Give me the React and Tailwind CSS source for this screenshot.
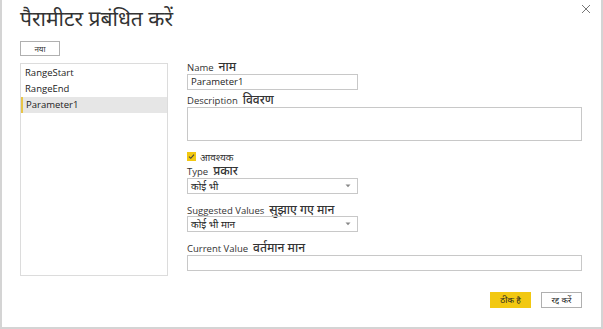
import React from "react";

const font = { fontFamily: '"Open Sans", "Noto Sans", "Noto Sans Devanagari", "Liberation Sans", sans-serif' };

function Label({ en, hi, className = "" }) {
  return (
    <div className={"flex items-baseline h-[13px] leading-[13px] text-[#333] " + className}>
      <span className="text-[9.5px]">{en}</span>
      <span className="text-[12px] ml-[5px] font-medium">{hi}</span>
    </div>
  );
}

function Select({ value }) {
  return (
    <div className="w-[171px] h-[16px] border border-[#c8c8c8] flex items-center justify-between pl-[3px] pr-[6px]">
      <span className="text-[10px] leading-none text-[#222]">{value}</span>
      <svg width="6" height="4" viewBox="0 0 6 4"><path d="M0.5 0.5 L3 3.3 L5.5 0.5 Z" fill="#888" /></svg>
    </div>
  );
}

export default function App() {
  return (
    <div style={font} className="w-[603px] h-[329px] bg-white border-l-2 border-r-2 border-b-2 border-[#d4d4d4] flex flex-col relative overflow-hidden">
      <button className="absolute right-[9px] top-[3px] w-[12px] h-[12px] flex items-center justify-center">
        <svg width="10" height="10" viewBox="0 0 10 10"><path d="M1 1 L9 9 M9 1 L1 9" stroke="#777" strokeWidth="1" /></svg>
      </button>
      <div className="pl-[18px] pt-[4px] h-[38px] text-[21px] leading-[28px] text-[#333]">पैरामीटर प्रबंधित करें</div>
      <div className="flex pl-[18px] pr-[19px]">
        <div className="w-[148px] flex flex-col">
          <div className="mt-[3px] w-[40px] h-[15px] border border-[#b0b0b0] flex items-center justify-center text-[8px] leading-none text-[#333]">नया</div>
          <div className="mt-[7px] h-[213px] border border-[#dcdcdc] pt-[1px] flex flex-col">
            <div className="h-[16px] flex items-center pl-[4px] text-[9.5px] text-[#222]">RangeStart</div>
            <div className="h-[16px] flex items-center pl-[4px] text-[9.5px] text-[#222]">RangeEnd</div>
            <div className="h-[16px] flex items-center pl-[3px] text-[9.5px] text-[#222] bg-[#e6e6e6] border-l-[2px] border-[#e8c547]">Parameter1</div>
          </div>
        </div>
        <div className="flex-1 ml-[19px] flex flex-col">
          <Label en="Name" hi="नाम" className="mt-[22px]" />
          <div className="mt-[1px] w-[171px] h-[16px] border border-[#c8c8c8] flex items-center pl-[3px] text-[9.5px] leading-none text-[#222]">Parameter1</div>
          <Label en="Description" hi="विवरण" className="mt-[3px]" />
          <div className="mt-[1px] h-[34px] border border-[#c8c8c8]" />
          <div className="mt-[10px] flex items-center h-[11px]">
            <div className="w-[9px] h-[9px] bg-[#f2c811] flex items-center justify-center">
              <svg width="7" height="7" viewBox="0 0 7 7"><path d="M1 3.6 L2.8 5.3 L6 1.6" stroke="#444" strokeWidth="1.1" fill="none" /></svg>
            </div>
            <span className="ml-[4px] text-[10px] leading-none text-[#333]">आवश्यक</span>
          </div>
          <Label en="Type" hi="प्रकार" className="mt-[2px]" />
          <div className="mt-[1px]"><Select value="कोई भी" /></div>
          <Label en="Suggested Values" hi="सुझाए गए मान" className="mt-[9px]" />
          <div className="mt-[0px]"><Select value="कोई भी मान" /></div>
          <Label en="Current Value" hi="वर्तमान मान" className="mt-[9px]" />
          <div className="mt-[1px] h-[16px] border border-[#c8c8c8]" />
        </div>
      </div>
      <div className="flex justify-end pr-[19px] mt-[16px] gap-[10px]">
        <div className="w-[41px] h-[16px] bg-[#f2c811] flex items-center justify-center text-[8.5px] leading-none text-[#222]">ठीक है</div>
        <div className="w-[41px] h-[16px] border border-[#b0b0b0] flex items-center justify-center text-[8.5px] leading-none text-[#222]">रद्द करें</div>
      </div>
    </div>
  );
}
